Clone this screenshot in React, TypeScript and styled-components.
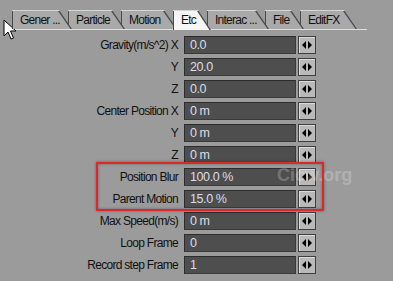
import React from "react";
import styled, { createGlobalStyle } from "styled-components";

const Global = createGlobalStyle`
  html, body { margin: 0; padding: 0; background: #9b9b9b; }
  body { font-family: "Liberation Sans", Arial, sans-serif; }
`;

const Page = styled.div`
  position: relative;
  width: 393px;
  height: 281px;
  overflow: hidden;
  background: #9b9b9b;
  font-family: "Liberation Sans", Arial, sans-serif;
`;

const TabStrip = styled.div`
  display: flex;
  margin: 10px 0 0 10px;
  padding-left: 2px;
  width: 355px;
  height: 19px;
  border-bottom: 1px solid #dedede;
`;

const TabOuter = styled.div<{ $w: number; $active?: boolean; $z: number }>`
  position: relative;
  z-index: ${(p) => (p.$active ? 20 : p.$z)};
  width: ${(p) => p.$w}px;
  height: ${(p) => (p.$active ? 20 : 19)}px;
  margin-right: -4px;
  flex: none;
  clip-path: polygon(0 0, calc(100% - 13px) 0, 100% 100%, 0 100%);
  background: linear-gradient(#d4d4d4 1px, #4a4a4a 1px);
`;

const TabFace = styled.div<{ $active?: boolean }>`
  height: 100%;
  box-sizing: border-box;
  padding: 2px 0 0 8px;
  clip-path: polygon(1px 1px, calc(100% - 14px) 1px, calc(100% - 1.5px) 100%, 1px 100%);
  background: ${(p) => (p.$active ? "#f6f6f6" : "#a9a9a9")};
  box-shadow: inset 1px 0 0 #d0d0d0;
  color: #111;
  font-size: 12px;
  letter-spacing: -0.75px;
  line-height: 16px;
  white-space: nowrap;
`;

const Rows = styled.div`
  display: flex;
  flex-direction: column;
  gap: 4px;
  margin-top: 6px;
`;

const Row = styled.div`
  display: flex;
  align-items: center;
  height: 18px;
`;

const Label = styled.div`
  width: 178px;
  margin-right: 6px;
  text-align: right;
  font-size: 12px;
  letter-spacing: -0.7px;
  color: #111;
  white-space: nowrap;
`;

const Field = styled.div`
  box-sizing: border-box;
  width: 112px;
  height: 18px;
  padding-left: 5px;
  background: #4e4e4e;
  border: 1px solid #2c2c2c;
  border-right-color: #3a3a3a;
  border-bottom-color: #3a3a3a;
  color: #d6deec;
  font-size: 12.5px;
  letter-spacing: -0.4px;
  line-height: 16px;
`;

const Spinner = styled.div`
  box-sizing: border-box;
  width: 18px;
  height: 18px;
  margin-left: 2px;
  display: flex;
  align-items: center;
  justify-content: center;
  background: #b9b9b9;
  border: 1px solid #3e3e3e;
  box-shadow: inset 1px 1px 0 #dcdcdc;
`;

const Highlight = styled.div`
  position: absolute;
  left: 96px;
  top: 162px;
  width: 228px;
  height: 49px;
  box-sizing: border-box;
  border: 2px solid #e1262a;
  box-shadow: 0 0 3px rgba(0, 0, 0, 0.35), inset 0 0 3px rgba(0, 0, 0, 0.35);
  pointer-events: none;
`;

const Watermark = styled.div`
  position: absolute;
  left: 277px;
  top: 165px;
  font-family: "Liberation Sans", Arial, sans-serif;
  font-weight: bold;
  font-size: 18px;
  color: rgba(255, 255, 255, 0.24);
  pointer-events: none;
`;

const Cursor = styled.svg`
  position: absolute;
  left: 3px;
  top: 19px;
`;

const tabs = [
  { label: "Gener ...", w: 60 },
  { label: "Particle", w: 57 },
  { label: "Motion", w: 56 },
  { label: "Etc", w: 38, active: true },
  { label: "Interac ...", w: 62 },
  { label: "File", w: 39 },
  { label: "EditFX", w: 57 },
];

const rows = [
  ["Gravity(m/s^2) X", "0.0"],
  ["Y", "20.0"],
  ["Z", "0.0"],
  ["Center Position X", "0 m"],
  ["Y", "0 m"],
  ["Z", "0 m"],
  ["Position Blur", "100.0 %"],
  ["Parent Motion", "15.0 %"],
  ["Max Speed(m/s)", "0 m"],
  ["Loop Frame", "0"],
  ["Record step Frame", "1"],
];

const Arrows = () => (
  <svg width="10" height="8" viewBox="0 0 10 8">
    <polygon points="4,0 4,8 0,4" fill="#000" />
    <polygon points="6,0 6,8 10,4" fill="#000" />
  </svg>
);

export default function App() {
  return (
    <Page>
      <Global />
      <TabStrip>
        {tabs.map((t, i) => (
          <TabOuter key={t.label} $w={t.w} $active={t.active} $z={10 - i}>
            <TabFace $active={t.active}>{t.label}</TabFace>
          </TabOuter>
        ))}
      </TabStrip>
      <Rows>
        {rows.map(([l, v], i) => (
          <Row key={i}>
            <Label>{l}</Label>
            <Field>{v}</Field>
            <Spinner>
              <Arrows />
            </Spinner>
          </Row>
        ))}
      </Rows>
      <Highlight />
      <Watermark>Cicw.org</Watermark>
      <Cursor width="14" height="22" viewBox="0 0 14 22">
        <path d="M1 1 L1 17 L5 13 L8 20 L10.5 19 L7.5 12 L13 12 Z" fill="#fff" stroke="#000" strokeWidth="1" strokeLinejoin="miter" />
      </Cursor>
    </Page>
  );
}
